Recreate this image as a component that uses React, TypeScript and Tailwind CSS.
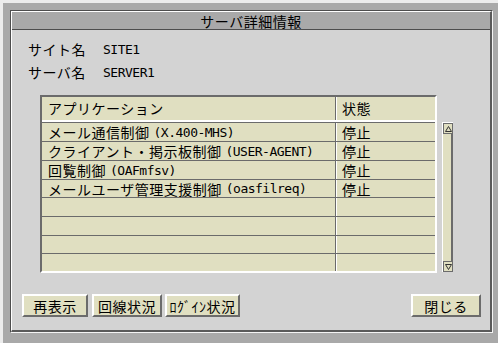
import React from "react";

const mono = "font-['DejaVu_Sans_Mono',monospace] text-[13px] tracking-[-0.5px]";

const rows = [
  { jp: "メール通信制御", en: "(X.400-MHS)", state: "停止", h: "h-[19px]" },
  { jp: "クライアント・掲示板制御", en: "(USER-AGENT)", state: "停止", h: "h-[19px]" },
  { jp: "回覧制御", en: "(OAFmfsv)", state: "停止", h: "h-[19px]" },
  { jp: "メールユーザ管理支援制御", en: "(oasfilreq)", state: "停止", h: "h-[18px]" },
  { jp: "", en: "", state: "", h: "h-[19px]" },
  { jp: "", en: "", state: "", h: "h-[19px]" },
  { jp: "", en: "", state: "", h: "h-[18px]" },
  { jp: "", en: "", state: "", h: "h-[18px]" },
];

function Btn({ label, w }: { label: string; w: string }) {
  return (
    <button
      className={`${w} h-[23px] bg-[#e0dfc1] border-t-2 border-l-2 border-white border-b-2 border-r-2 border-b-[#6b6b6b] border-r-[#6b6b6b] text-[14px] leading-none text-black flex items-center justify-center`}
    >
      {label}
    </button>
  );
}

export default function App() {
  return (
    <div
      className="w-[498px] h-[343px] bg-[#a9a9a9] border-t-[3px] border-l-[3px] border-[#ececec] pt-[7px] pl-[7px] tracking-[0.5px]"
      style={{ fontFamily: '"Noto Sans CJK JP", sans-serif' }}
    >
      <div className="w-[483px] h-[323px] border border-[#4d4d4d] border-r-[#f4f4f4] border-b-[#f4f4f4] flex flex-col">
        <div className="flex-1 flex flex-col border-t border-l border-white border-r-2 border-b-2 border-r-[#5a5a5a] border-b-[#5a5a5a]">
          {/* title */}
          <div className="h-[18px] bg-[#a9a9a9] border-b border-[#4d4d4d] flex items-center justify-center text-[14px] leading-none text-black">
            サーバ詳細情報
          </div>

          {/* body */}
          <div className="flex-1 bg-[#d3d3d3] pt-[8px] pl-[16px] pr-[9px] flex flex-col">
            <div className="flex flex-col text-[14px] text-black">
              <div className="h-[23px] flex items-center">
                <span className="w-[75px]">サイト名</span>
                <span className={mono}>SITE1</span>
              </div>
              <div className="h-[23px] flex items-center">
                <span className="w-[75px]">サーバ名</span>
                <span className={mono}>SERVER1</span>
              </div>
            </div>

            {/* table + scrollbar */}
            <div className="mt-[11px] ml-[12px] flex items-end gap-[5px]">
              <div className="w-[397px] border-2 border-[#6b6b6b] border-b-white border-r-white bg-[#e0dfc1] text-[14px] text-black">
                <div className="h-[23px] flex">
                  <div className="w-[294px] border-r border-[#6b6b6b] flex items-center pl-[6px]">
                    アプリケーション
                  </div>
                  <div className="flex-1 border-l border-white flex items-center pl-[5px]">状態</div>
                </div>
                <div className="h-[2px] bg-white" />
                {rows.map((r, i) => (
                  <div key={i} className={`${r.h} flex border-t border-[#6b6b6b]`}>
                    <div className="w-[294px] border-r border-[#6b6b6b] flex items-center pl-[6px] whitespace-nowrap leading-none">
                      {r.jp}
                      {r.en && <span className={`${mono} ml-[4px]`}>{r.en}</span>}
                    </div>
                    <div className="flex-1 border-l border-white flex items-center pl-[5px] leading-none">
                      {r.state}
                    </div>
                  </div>
                ))}
              </div>

              {/* scrollbar */}
              <div className="w-[11px] h-[150px] bg-[#e0dfc1] border-l border-t border-white flex flex-col mb-[1px]">
                <div className="h-[11px] border border-[#6b6b6b] flex items-center justify-center">
                  <svg width="7" height="6" viewBox="0 0 7 6">
                    <path d="M3.5 0.5 L6.5 5.5 L0.5 5.5 Z" fill="none" stroke="#333" strokeWidth="1" />
                  </svg>
                </div>
                <div className="flex-1 border-r-2 border-[#6b6b6b]" />
                <div className="h-[11px] border border-[#6b6b6b] flex items-center justify-center">
                  <svg width="7" height="6" viewBox="0 0 7 6">
                    <path d="M0.5 0.5 L6.5 0.5 L3.5 5.5 Z" fill="none" stroke="#333" strokeWidth="1" />
                  </svg>
                </div>
              </div>
            </div>

            {/* buttons */}
            <div className="mt-[21px] -ml-[6px] flex items-center">
              <Btn label="再表示" w="w-[66px]" />
              <div className="w-[4px]" />
              <Btn label="回線状況" w="w-[70px]" />
              <div className="w-[3px]" />
              <Btn label="ﾛｸﾞｲﾝ状況" w="w-[75px]" />
              <div className="flex-1" />
              <Btn label="閉じる" w="w-[70px]" />
            </div>
          </div>
        </div>
      </div>
    </div>
  );
}
